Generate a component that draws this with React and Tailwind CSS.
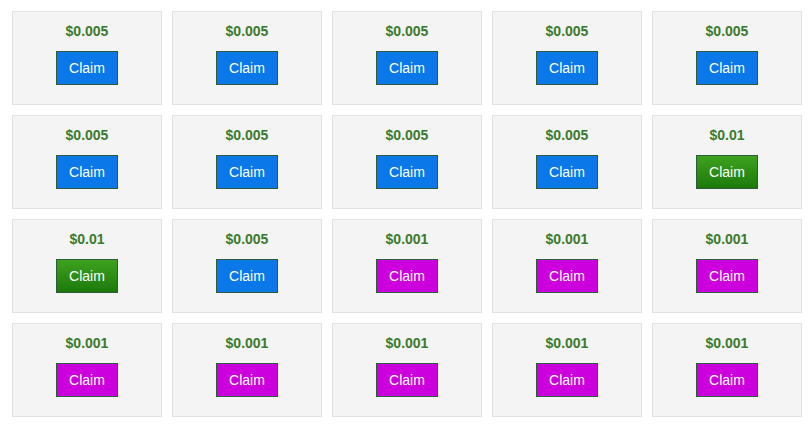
import React from 'react';

const blue = 'bg-[#0a78e8]';
const purple = 'bg-[#cc00dc]';
const green = 'bg-gradient-to-b from-[#3da21e] to-[#1c7a0c]';

const cells = [
  ['$0.005', blue], ['$0.005', blue], ['$0.005', blue], ['$0.005', blue], ['$0.005', blue],
  ['$0.005', blue], ['$0.005', blue], ['$0.005', blue], ['$0.005', blue], ['$0.01', green],
  ['$0.01', green], ['$0.005', blue], ['$0.001', purple], ['$0.001', purple], ['$0.001', purple],
  ['$0.001', purple], ['$0.001', purple], ['$0.001', purple], ['$0.001', purple], ['$0.001', purple],
];

const Card = ({ amount, color }) => (
  <div className="h-[94px] bg-[#f4f4f4] border border-[#e2e2e2] flex flex-col items-center pt-[9px]">
    <p className="font-bold text-[14px] leading-[20px] text-[#3a7a2e]">{amount}</p>
    <button
      type="button"
      className={`mt-[10px] w-[62px] h-[34px] ${color} border border-[#2f5a3a] text-white text-[14px] leading-none`}
    >
      Claim
    </button>
  </div>
);

const App = () => {
  return (
    <div className="w-[809px] h-[427px] bg-white pl-[12px] pt-[11px]" style={{ fontFamily: '"Liberation Sans", Arial, sans-serif' }}>
      <div className="grid grid-cols-[repeat(5,150px)] gap-[10px]">
        {cells.map(([amount, color], i) => (
          <Card key={i} amount={amount} color={color} />
        ))}
      </div>
    </div>
  );
};

export default App;
